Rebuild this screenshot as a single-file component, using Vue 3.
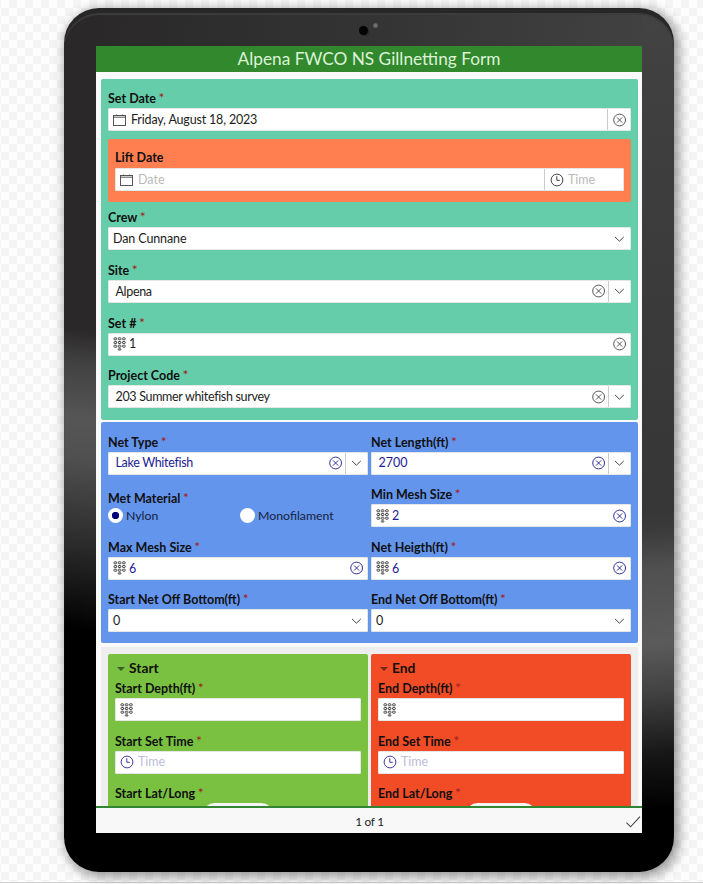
<script setup>
import { h } from 'vue'

const Icon = ({ name }) => {
  const stroke = { fill: 'none', stroke: 'currentColor' }
  const shapes = {
    calendar: () => [
      h('rect', { x: 0.5, y: 2.5, width: 12, height: 10, ...stroke, 'stroke-width': 0.9 }),
      h('path', { d: 'M0.5 4.2H12.5M3.5 1.6V3M9.5 1.6V3', ...stroke, 'stroke-width': 0.9 }),
    ],
    clock: () => [
      h('circle', { cx: 7, cy: 7, r: 5.9, ...stroke, 'stroke-width': 1 }),
      h('path', { d: 'M6.8 3.2V7.3H9.8', ...stroke, 'stroke-width': 1 }),
    ],
    clear: () => [
      h('circle', { cx: 6.6, cy: 7, r: 5.9, ...stroke, 'stroke-width': 0.9 }),
      h('path', { d: 'M4 4.4L9.2 9.6M9.2 4.4L4 9.6', ...stroke, 'stroke-width': 0.9 }),
    ],
    chevron: () => [h('path', { d: 'M2 4.9L6.4 9.2L10.8 4.9', ...stroke, 'stroke-width': 1 })],
    keypad: () => [
      ...[0.8, 4.5, 8.2].flatMap((y) =>
        [1, 5.3, 9.6].map((x) => h('rect', { x, y, width: 2.6, height: 2, rx: 0.5, ...stroke, 'stroke-width': 1 }))
      ),
      h('rect', { x: 5.3, y: 11.8, width: 2.6, height: 1.2, rx: 0.4, ...stroke, 'stroke-width': 1 }),
    ],
    check: () => [h('path', { d: 'M0.4 8.6L4.6 12.8L14 2.6', ...stroke, 'stroke-width': 1.1 })],
  }
  return h('svg', { class: 'icon icon-' + name, viewBox: '0 0 14 14', width: 14, height: 14 }, shapes[name]())
}
Icon.props = ['name']

const survey = [
  { label: 'Crew', value: 'Dan Cunnane', kind: 'select' },
  { label: 'Site', value: 'Alpena', kind: 'combo' },
  { label: 'Set #', value: '1', kind: 'number' },
  { label: 'Project Code', value: '203 Summer whitefish survey', kind: 'combo' },
]

const net = [
  { label: 'Net Type', value: 'Lake Whitefish', kind: 'combo' },
  { label: 'Net Length(ft)', value: '2700', kind: 'combo' },
  { label: 'Met Material', kind: 'radio', options: ['Nylon', 'Monofilament'], selected: 'Nylon' },
  { label: 'Min Mesh Size', value: '2', kind: 'number' },
  { label: 'Max Mesh Size', value: '6', kind: 'number' },
  { label: 'Net Heigth(ft)', value: '6', kind: 'number' },
  { label: 'Start Net Off Bottom(ft)', value: '0', kind: 'select' },
  { label: 'End Net Off Bottom(ft)', value: '0', kind: 'select' },
]

const ends = ['Start', 'End']
</script>

<template>
  <main class="stage">
    <div class="tablet">
      <div class="camera"></div>
      <div class="sensor"></div>
      <div class="screen">
        <header class="title">Alpena FWCO NS Gillnetting Form</header>
        <div class="form">
          <section class="panel survey">
            <div class="label">Set Date <i>*</i></div>
            <div class="input">
              <Icon name="calendar" /><span class="value">Friday, August 18, 2023</span>
              <span class="cell"><Icon name="clear" /></span>
            </div>
            <div class="lift">
              <div class="label">Lift Date</div>
              <div class="input">
                <Icon name="calendar" /><span class="value hint">Date</span>
                <span class="time"><Icon name="clock" /><span class="hint">Time</span></span>
              </div>
            </div>
            <div v-for="f in survey" :key="f.label" class="field">
              <div class="label">{{ f.label }} <i>*</i></div>
              <div class="input" :class="f.kind">
                <Icon v-if="f.kind === 'number'" name="keypad" />
                <span class="value">{{ f.value }}</span>
                <Icon v-if="f.kind !== 'select'" name="clear" />
                <span v-if="f.kind !== 'number'" class="cell"><Icon name="chevron" /></span>
              </div>
            </div>
          </section>

          <section class="panel net">
            <div v-for="f in net" :key="f.label" class="field" :class="'field-' + f.kind">
              <div class="label">{{ f.label }} <i>*</i></div>
              <div v-if="f.kind === 'radio'" class="radios">
                <span v-for="o in f.options" :key="o" class="radio">
                  <b :class="{ on: o === f.selected }"></b>{{ o }}
                </span>
              </div>
              <div v-else class="input" :class="f.kind">
                <Icon v-if="f.kind === 'number'" name="keypad" />
                <span class="value">{{ f.value }}</span>
                <Icon v-if="f.kind !== 'select'" name="clear" />
                <span v-if="f.kind !== 'number'" class="cell"><Icon name="chevron" /></span>
              </div>
            </div>
          </section>

          <section class="ends">
            <div v-for="e in ends" :key="e" class="end" :class="e.toLowerCase()">
              <h2><span class="caret"></span>{{ e }}</h2>
              <div class="label">{{ e }} Depth(ft) <i>*</i></div>
              <div class="input number"><Icon name="keypad" /></div>
              <div class="field">
                <div class="label">{{ e }} Set Time <i>*</i></div>
                <div class="input when"><Icon name="clock" /><span class="value hint">Time</span></div>
              </div>
              <div class="field">
                <div class="label">{{ e }} Lat/Long <i>*</i></div>
                <div class="pill"></div>
              </div>
            </div>
          </section>
        </div>
        <footer class="pager"><span>1 of 1</span><Icon name="check" /></footer>
      </div>
    </div>
  </main>
</template>

<style>
body { overflow: hidden; }
</style>

<style scoped>
* { box-sizing: border-box; }
.stage {
  width: 703px; height: 884px; padding: 8px 0 0 64px; overflow: hidden;
  background:
    linear-gradient(#d2d2d2, #d2d2d2) 0 882px / 100% 1px no-repeat,
    linear-gradient(#fff, #fff) 0 883px / 100% 1px no-repeat,
    conic-gradient(#f4f4f4 25%, #fdfdfd 0 50%, #f4f4f4 0 75%, #fdfdfd 0) 1px 0 / 16px 16px;
  font: 12.5px/20px Lato, "Liberation Sans", sans-serif;
  color: #1c1c1c;
}
.tablet {
  position: relative; width: 610px; height: 864px; padding: 38px 32px 39px; border-radius: 35px;
  background:
    linear-gradient(184deg, #2a2829 0, #2a2829 321px, #424142 355px, #555 410px, #505050 450px, #292929 540px, #000 622px, #000) 0 0 / 32px 100% no-repeat,
    linear-gradient(176deg, #434344 0, #3f3f40 100px, #363637 500px, #3b3b3b 522px, #505050 560px, #5b5b5b 635px, #444 680px, #171717 745px, #000 800px) 578px 0 / 32px 100% no-repeat,
    linear-gradient(95deg, #292728, #353535 55%, #434344) 0 0 / 100% 60px no-repeat,
    #000;
  box-shadow: 3px 3px 12px 2px rgba(0, 0, 0, .4), inset 0 5px 0 #272727, inset 0 7px 1px #3c3c3c;
}
.camera { position: absolute; left: 295px; top: 18px; width: 9px; height: 9px; border-radius: 50%; background: #030303; box-shadow: 1px 1px 0 #252525; }
.sensor { position: absolute; left: 309px; top: 15px; width: 5px; height: 5px; border-radius: 50%; background: radial-gradient(#777, #505050); }
.screen { width: 546px; height: 787px; display: flex; flex-direction: column; background: #fafafa; overflow: hidden; }
.title { height: 26px; flex: none; background: #31882d; color: #dcf3d8; text-align: center; font-size: 17.25px; line-height: 25px; }
.form { flex: 1; min-height: 0; overflow: hidden; padding: 7px 4px 0 5px; display: flex; flex-direction: column; }
.panel { border-radius: 2px; flex: none; }
.survey { height: 340.5px; padding: 9px 7px 0; background: #66cdaa; }
.label { height: 20px; line-height: 21px; font-weight: 700; color: #101010; white-space: nowrap; }
.label i { font-style: normal; font-weight: 400; font-size: 14px; line-height: 1; margin-left: -0.5px; color: #a02121; }
.input { height: 23px; display: flex; align-items: center; background: #fff; border: 1px solid #e3e7e5; border-radius: 1px; padding: 0 3px 0 4px; }
.value { flex: 1; white-space: nowrap; padding-left: 4px; padding-top: 0.8px; font-size: 12.5px; letter-spacing: -0.17px; }
.icon { display: block; flex: none; color: #444; overflow: visible; }
.cell { height: 100%; display: flex; align-items: center; border-left: 1px solid #ccc; padding-left: 4px; margin-left: 2px; }
.survey > .input .cell { padding-left: 5px; }
.hint { color: #bababa; }
.value.hint { letter-spacing: 0; padding-top: 0; }
.lift { margin-top: 8px; height: 63px; padding: 9px 7px 0; background: #ff7f50; border-radius: 2px; }
.lift .label { line-height: 20px; }
.time { display: flex; align-items: center; gap: 4px; width: 76px; height: 100%; border-left: 1px solid #ccc; padding-left: 5px; }
.field { padding-top: 9.6px; }
.lift + .field { padding-top: 5.4px; }
.combo .value { padding-left: 2.5px; letter-spacing: -0.32px; }
.net .field:nth-child(2) .value { letter-spacing: 0; }
.select .value { padding-left: 0; letter-spacing: -0.12px; }
.select .cell { border: 0; }
.number .value { padding-left: 2px; }
.net { height: 221px; margin-top: 2.5px; padding: 0 7px; background: #6495ed; display: grid; grid-template-columns: 260px 260px; column-gap: 3px; align-content: start; }
.net .value, .net .icon-clear { color: #1c1c94; }
.net .select .value { color: #1c1c1c; }
.radios { display: grid; grid-template-columns: 1fr 1fr; }
.radio { display: flex; align-items: center; gap: 3px; line-height: 15px; font-size: 12.3px; color: #14223c; }
.radio:last-child { margin-left: 2px; }
.radio b { width: 15px; height: 15px; border-radius: 50%; background: #fff; }
.radio b.on { background: radial-gradient(circle, #00007c 3.4px, #fff 4px); }
.field-radio { padding-top: 13.2px; }
.ends { flex: none; margin-top: 4px; height: 170px; padding: 7px 7px 0; background: #eee; display: flex; gap: 3px; }
.end { width: 260px; padding: 4px 7px 0; border-radius: 2px; }
.start { background: #7ac142; }
.end.end:not(.start) { background: #f24c27; }
h2 { margin: 0; display: flex; align-items: center; height: 20px; font-size: 13.8px; color: #10100c; }
.caret { border: 4px solid transparent; border-top-color: rgba(0, 0, 0, .5); border-bottom: 0; margin: 2px 4px 0 2px; }
.when .icon { color: #453a9e; }
.when .hint { color: #bcbcdc; }
.pill { width: 70px; height: 23px; margin: -0.4px 0 0 88px; border-radius: 12px; background: #f4f4f4; }
.pager { position: relative; height: 27px; flex: none; display: flex; align-items: center; justify-content: center; background: #f8f8f8; border-top: 2px solid #318731; font-size: 11.8px; line-height: 18px; padding-top: 2px; }
.pager span { letter-spacing: -0.3px; margin-left: 1px; }
.pager .icon { position: absolute; right: 2px; top: 6px; }
</style>
